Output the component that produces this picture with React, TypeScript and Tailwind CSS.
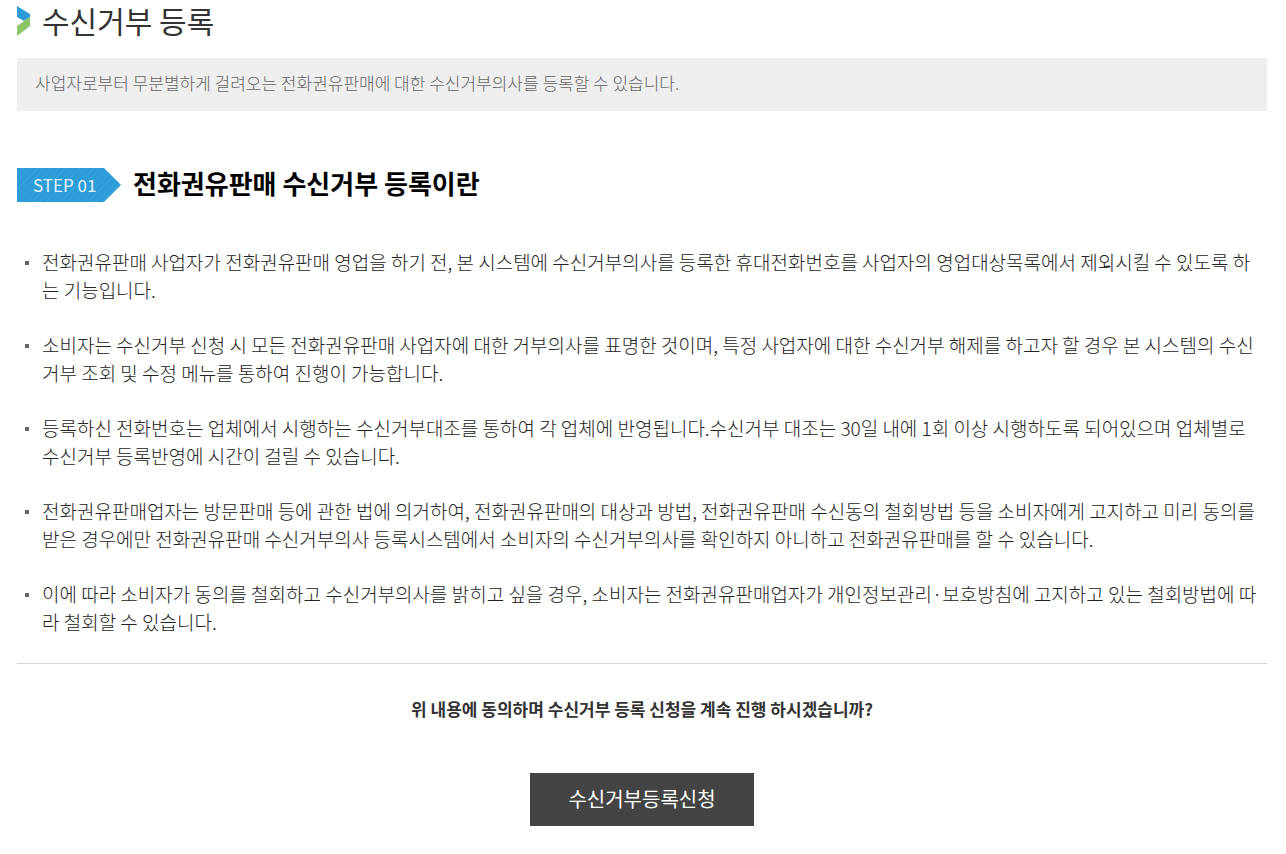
const NOTES = [
  "전화권유판매 사업자가 전화권유판매 영업을 하기 전, 본 시스템에 수신거부의사를 등록한 휴대전화번호를 사업자의 영업대상목록에서 제외시킬 수 있도록 하는 기능입니다.",
  "소비자는 수신거부 신청 시 모든 전화권유판매 사업자에 대한 거부의사를 표명한 것이며, 특정 사업자에 대한 수신거부 해제를 하고자 할 경우 본 시스템의 수신거부 조회 및 수정 메뉴를 통하여 진행이 가능합니다.",
  "등록하신 전화번호는 업체에서 시행하는 수신거부대조를 통하여 각 업체에 반영됩니다.수신거부 대조는 30일 내에 1회 이상 시행하도록 되어있으며 업체별로 수신거부 등록반영에 시간이 걸릴 수 있습니다.",
  "전화권유판매업자는 방문판매 등에 관한 법에 의거하여, 전화권유판매의 대상과 방법, 전화권유판매 수신동의 철회방법 등을 소비자에게 고지하고 미리 동의를 받은 경우에만 전화권유판매 수신거부의사 등록시스템에서 소비자의 수신거부의사를 확인하지 아니하고 전화권유판매를 할 수 있습니다.",
  "이에 따라 소비자가 동의를 철회하고 수신거부의사를 밝히고 싶을 경우, 소비자는 전화권유판매업자가 개인정보관리·보호방침에 고지하고 있는 철회방법에 따라 철회할 수 있습니다.",
];

function TitleMark() {
  return (
    <svg className="shrink-0" width="13" height="30" viewBox="0 0 13 30" aria-hidden="true">
      <path d="M0 0 L13 8 V11 L7 15 L0 11 Z" fill="#2d9cd6" />
      <path d="M13 11 V20 L0 30 V20 Z" fill="#8bc667" />
    </svg>
  );
}

function StepFlag({ label }: { label: string }) {
  return (
    <div className="grid shrink-0 items-center">
      <svg
        className="col-start-1 row-start-1"
        width="104"
        height="34"
        viewBox="0 0 104 34"
        aria-hidden="true"
      >
        <defs>
          <pattern id="stripe" width="7" height="7" patternUnits="userSpaceOnUse">
            <path d="M-1 8 L8 -1 M-1 1 L1 -1 M6 8 L8 6" stroke="#3ea5db" strokeWidth="1" />
          </pattern>
        </defs>
        <path d="M0 0 H87 L104 17 L87 34 H0 Z" fill="#2b9cd8" />
        <path d="M0 0 H87 L104 17 L87 34 H0 Z" fill="url(#stripe)" />
      </svg>
      <span className="col-start-1 row-start-1 pl-4 text-[17px] leading-6 text-[#e3f3fb]">
        {label}
      </span>
    </div>
  );
}

export default function App() {
  return (
    <main className="bg-white pr-[19px] pb-7 pl-[17px] font-['Noto_Sans_CJK_KR','Noto_Sans',sans-serif] text-[#333]">
      <header className="flex h-[58px] items-start gap-3 pt-[6px]">
        <TitleMark />
        <h1 className="text-[30px] leading-7 font-normal">수신거부 등록</h1>
      </header>

      <p className="bg-[#eee] px-[18px] pt-3 pb-4 text-[17px] leading-[25px] font-light text-[#666]">
        사업자로부터 무분별하게 걸려오는 전화권유판매에 대한 수신거부의사를 등록할 수 있습니다.
      </p>

      <section className="pt-[57px]">
        <div className="flex items-start gap-3">
          <StepFlag label="STEP 01" />
          <h2 className="text-[26px] leading-[30px] font-bold text-black">
            전화권유판매 수신거부 등록이란
          </h2>
        </div>

        <ul className="flex flex-col gap-[27px] border-b border-[#d5d5d5] pt-[46px] pr-2 pb-[27px] text-[19px] leading-7 font-light text-[#222]">
          {NOTES.map((note) => (
            <li key={note} className="flex gap-[13px] pl-2">
              <span className="mt-[13px] size-1 shrink-0 bg-[#666]" />
              <p>{note}</p>
            </li>
          ))}
        </ul>
      </section>

      <div className="flex flex-col items-center gap-[51px] pt-8">
        <p className="text-[17px] leading-[26px] font-bold">
          위 내용에 동의하며 수신거부 등록 신청을 계속 진행 하시겠습니까?
        </p>
        <button type="button" className="bg-[#444] px-[38px] pt-3 pb-[14px] text-[20px] leading-[27px] text-white">
          수신거부등록신청
        </button>
      </div>
    </main>
  );
}
